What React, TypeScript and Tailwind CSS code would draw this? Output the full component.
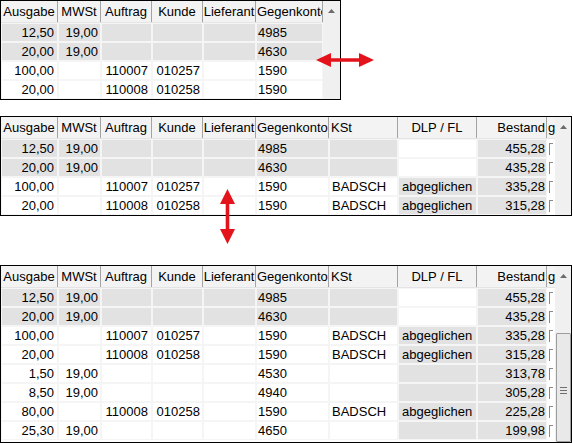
import React from 'react'

type Row = {
  a: string
  m?: string
  auf?: string
  k?: string
  l?: string
  g: string
  kst?: string
  dlp?: string
  b: string
  hi?: boolean
}

type Col = {
  key: 'a' | 'm' | 'auf' | 'k' | 'l' | 'g' | 'kst' | 'dlp' | 'b'
  label: string
  width: string
  head: string
  cell: string
}

const rows: Row[] = [
  { a: '12,50', m: '19,00', g: '4985', b: '455,28', hi: true },
  { a: '20,00', m: '19,00', g: '4630', b: '435,28', hi: true },
  { a: '100,00', auf: '110007', k: '010257', g: '1590', kst: 'BADSCH', dlp: 'abgeglichen', b: '335,28' },
  { a: '20,00', auf: '110008', k: '010258', g: '1590', kst: 'BADSCH', dlp: 'abgeglichen', b: '315,28' },
  { a: '1,50', m: '19,00', g: '4530', b: '313,78' },
  { a: '8,50', m: '19,00', g: '4940', b: '305,28' },
  { a: '80,00', auf: '110008', k: '010258', g: '1590', kst: 'BADSCH', dlp: 'abgeglichen', b: '225,28' },
  { a: '25,30', m: '19,00', g: '4650', b: '199,98' },
]

const baseCols: Col[] = [
  { key: 'a', label: 'Ausgabe', width: 'w-[57px]', head: 'justify-center', cell: 'justify-end pr-[3px]' },
  { key: 'm', label: 'MWSt', width: 'w-[43px]', head: 'justify-center', cell: 'justify-end pr-[2px]' },
  { key: 'auf', label: 'Auftrag', width: 'w-[51px]', head: 'justify-center', cell: 'justify-end pr-[3px]' },
  { key: 'k', label: 'Kunde', width: 'w-[51px]', head: 'justify-center', cell: 'justify-end pr-[2px]' },
  { key: 'l', label: 'Lieferant', width: 'w-[53px]', head: 'justify-center', cell: 'justify-start pl-[2px]' },
]

const narrowCols: Col[] = [
  ...baseCols,
  { key: 'g', label: 'Gegenkonto', width: 'w-[67px]', head: 'justify-start pl-[1px]', cell: 'justify-start pl-[1px]' },
]

const wideCols: Col[] = [
  ...baseCols,
  { key: 'g', label: 'Gegenkonto', width: 'w-[73px]', head: 'justify-start pl-[1px]', cell: 'justify-start pl-[1px]' },
  { key: 'kst', label: 'KSt', width: 'w-[69px]', head: 'justify-start pl-[2px]', cell: 'justify-start pl-[2px]' },
  { key: 'dlp', label: 'DLP / FL', width: 'w-[79px]', head: 'justify-center', cell: 'justify-start pl-[3px]' },
  { key: 'b', label: 'Bestand', width: 'w-[70px]', head: 'justify-end pr-[1px]', cell: 'justify-end pr-[1px]' },
]

// which cells get the grey fill
function shaded(col: Col['key'], row: Row) {
  if (col === 'b') return true
  if (col === 'dlp') return !row.hi
  return !!row.hi
}

function UpArrow() {
  return (
    <svg width="7" height="4" viewBox="0 0 7 4" className="block">
      <polygon points="0,4 3.5,0 7,4" fill="#6b6b6b" />
    </svg>
  )
}

function Grid({ cols, data, partial, thumb }: { cols: Col[]; data: Row[]; partial?: boolean; thumb?: boolean }) {
  return (
    <div className="flex h-full border border-black bg-white overflow-hidden">
      <div className="flex flex-col">
        <div className="flex h-[22px] shrink-0 bg-[#f3f3f3] border-b border-[#e4e4e4]">
          {cols.map((c) => (
            <div
              key={c.key}
              className={`${c.width} ${c.head} flex items-center border-r border-[#a3a3a3] overflow-hidden whitespace-nowrap`}
            >
              {c.label}
            </div>
          ))}
          {partial && (
            <div className="w-[8px] flex items-center pl-[1px] overflow-hidden">
              <span className="underline">g</span>
            </div>
          )}
        </div>
        {data.map((r, i) => (
          <div key={i} className="flex h-[19px] shrink-0">
            {cols.map((c) => (
              <div
                key={c.key}
                className={`${c.width} ${c.cell} flex items-center border border-[#f5f5f5] whitespace-nowrap overflow-hidden ${
                  shaded(c.key, r) ? 'bg-[#e2e2e2]' : 'bg-white'
                }`}
              >
                {r[c.key] ?? ''}
              </div>
            ))}
            {partial && (
              <div className="w-[8px] flex items-center pl-[2px]">
                <div className="w-[4px] h-[12px] border-l border-t border-[#8a8a8a]" />
              </div>
            )}
          </div>
        ))}
      </div>
      {/* vertical scrollbar */}
      <div className="flex-1 bg-[#f0f0f0] flex flex-col items-center">
        <div className="h-[20px] shrink-0 flex items-center justify-center">
          <UpArrow />
        </div>
        {thumb && (
          <div className="mt-[47px] w-[15px] h-[120px] border border-[#9d9d9d] bg-[#e9e9e9] rounded-[1px] flex flex-col items-center pt-[53px] gap-[2px]">
            <div className="w-[7px] h-px bg-[#6f6f6f]" />
            <div className="w-[7px] h-px bg-[#6f6f6f]" />
            <div className="w-[7px] h-px bg-[#6f6f6f]" />
          </div>
        )}
      </div>
    </div>
  )
}

export default function App() {
  return (
    <div className="relative w-[573px] h-[443px] bg-white overflow-hidden text-[13px] text-black font-['Liberation_Sans',Arial,sans-serif]">
      <div className="flex flex-col">
        <div className="w-[341px] h-[100px]">
          <Grid cols={narrowCols} data={rows.slice(0, 4)} />
        </div>
        <div className="mt-[16px] w-[572px] h-[100px]">
          <Grid cols={wideCols} data={rows.slice(0, 4)} partial />
        </div>
        <div className="mt-[49px] w-[572px] h-[178px]">
          <Grid cols={wideCols} data={rows} partial thumb />
        </div>
      </div>

      {/* red resize hints */}
      <svg className="absolute left-[316px] top-[53px]" width="58" height="14" viewBox="0 0 58 14">
        <polygon points="0,7 15,0 15,5.3 43,5.3 43,0 58,7 43,14 43,8.7 15,8.7 15,14" fill="#e3121b" />
      </svg>
      <svg className="absolute left-[220px] top-[189px]" width="15" height="55" viewBox="0 0 15 55">
        <polygon points="7.5,0 15,15 9.3,15 9.3,40 15,40 7.5,55 0,40 5.7,40 5.7,15 0,15" fill="#e3121b" />
      </svg>
    </div>
  )
}
